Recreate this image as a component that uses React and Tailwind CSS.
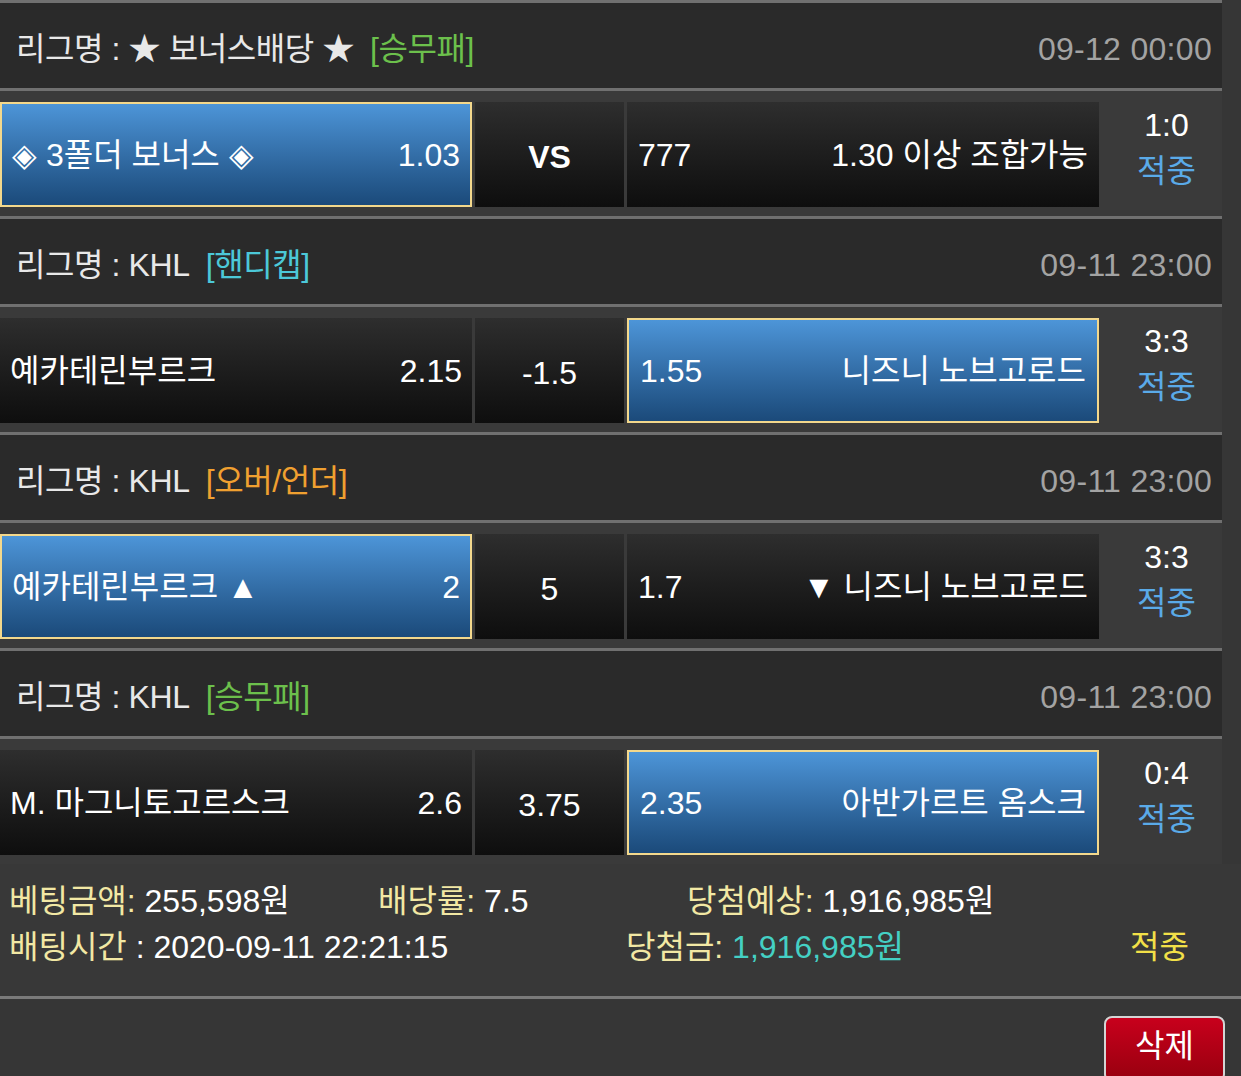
import React from 'react';

const games = [
    {
        league: '★ 보너스배당 ★',
        type: '[승무패]',
        typeColor: 'text-[#6cc04c]',
        time: '09-12 00:00',
        home: '◈ 3폴더 보너스 ◈',
        homeOdds: '1.03',
        mid: 'VS',
        awayOdds: '777',
        away: '1.30 이상 조합가능',
        pick: 'home',
        score: '1:0',
    },
    {
        league: 'KHL',
        type: '[핸디캡]',
        typeColor: 'text-[#4cc8d8]',
        time: '09-11 23:00',
        home: '예카테린부르크',
        homeOdds: '2.15',
        mid: '-1.5',
        awayOdds: '1.55',
        away: '니즈니 노브고로드',
        pick: 'away',
        score: '3:3',
    },
    {
        league: 'KHL',
        type: '[오버/언더]',
        typeColor: 'text-[#f0a030]',
        time: '09-11 23:00',
        home: '예카테린부르크 ▲',
        homeOdds: '2',
        mid: '5',
        awayOdds: '1.7',
        away: '▼ 니즈니 노브고로드',
        pick: 'home',
        score: '3:3',
    },
    {
        league: 'KHL',
        type: '[승무패]',
        typeColor: 'text-[#6cc04c]',
        time: '09-11 23:00',
        home: 'M. 마그니토고르스크',
        homeOdds: '2.6',
        mid: '3.75',
        awayOdds: '2.35',
        away: '아반가르트 옴스크',
        pick: 'away',
        score: '0:4',
    },
];

const cellBase = 'h-[105px] flex items-center text-white';
const cellOff = 'bg-gradient-to-b from-[#2e2e2e] to-[#0e0e0e]';
const cellOn = 'bg-gradient-to-b from-[#4d95d8] to-[#1b4a7a] border-2 border-[#f3d88c]';

function GameBlock({ game }) {
    return (
        <div className="w-[1222px]">
            {/* league header */}
            <div className="h-[88px] border-t-[3px] border-[#707070] bg-[#2a2a2a] flex items-center justify-between pl-4 pr-[10px] pt-[7px]">
                <div className="text-[#e8e8e8] tracking-[-0.4px]">
                    리그명 : {game.league}
                    <span className={`ml-[16px] ${game.typeColor}`}>{game.type}</span>
                </div>
                <div className="text-[#a3a3a3] tracking-[0.3px]">{game.time}</div>
            </div>

            {/* match row */}
            <div className="h-[128px] border-t-[3px] border-[#707070] bg-[#3a3a3a] pt-[11px] flex">
                <div className="flex gap-[3px]">
                    <div className={`${cellBase} w-[472px] justify-between px-[10px] ${game.pick === 'home' ? cellOn : cellOff}`}>
                        <span>{game.home}</span>
                        <span>{game.homeOdds}</span>
                    </div>
                    <div className={`${cellBase} w-[149px] justify-center pt-[4px] ${cellOff} ${game.mid === 'VS' ? 'font-bold' : ''}`}>
                        {game.mid}
                    </div>
                    <div className={`${cellBase} w-[472px] justify-between px-[11px] ${game.pick === 'away' ? cellOn : cellOff}`}>
                        <span>{game.awayOdds}</span>
                        <span>{game.away}</span>
                    </div>
                </div>
                <div className="flex-1 flex flex-col items-center pl-[12px] leading-[46px]">
                    <span className="text-white">{game.score}</span>
                    <span className="text-[#5aaae8]">적중</span>
                </div>
            </div>
        </div>
    );
}

export default function App() {
    return (
        <div className="w-[1241px] h-[1076px] overflow-hidden bg-[#363636] text-[32px] leading-none font-['Liberation_Sans','Noto_Sans_CJK_KR',sans-serif]">
            {games.map((game, i) => (
                <GameBlock key={i} game={game} />
            ))}

            {/* summary */}
            <div className="h-[132px] bg-[#383838] pl-[9px] pt-[20px] flex flex-col gap-[12px] leading-[34px]">
                <div className="flex">
                    <span className="w-[369px]">
                        <span className="text-[#f2e8a4]">베팅금액:</span>
                        <span className="text-white"> 255,598원</span>
                    </span>
                    <span className="w-[309px]">
                        <span className="text-[#f2e8a4]">배당률:</span>
                        <span className="text-white"> 7.5</span>
                    </span>
                    <span>
                        <span className="text-[#f2e8a4]">당첨예상:</span>
                        <span className="text-white"> 1,916,985원</span>
                    </span>
                </div>
                <div className="flex">
                    <span className="w-[617px]">
                        <span className="text-[#f2e8a4]">배팅시간</span>
                        <span className="text-white"> : 2020-09-11 22:21:15</span>
                    </span>
                    <span className="w-[504px]">
                        <span className="text-[#f2e8a4]">당첨금:</span>
                        <span className="text-[#44d0c4]"> 1,916,985원</span>
                    </span>
                    <span className="text-[#f2e048]">적중</span>
                </div>
            </div>

            {/* actions */}
            <div className="border-t-[3px] border-[#7a7a7a] flex justify-end pr-[16px] pt-[17px]">
                <button className="w-[121px] h-[66px] rounded-[8px] border-2 border-[#d4d4d4] bg-gradient-to-b from-[#c8001c] to-[#98000f] text-white text-[32px] pb-[6px]">
                    삭제
                </button>
            </div>
        </div>
    );
}
